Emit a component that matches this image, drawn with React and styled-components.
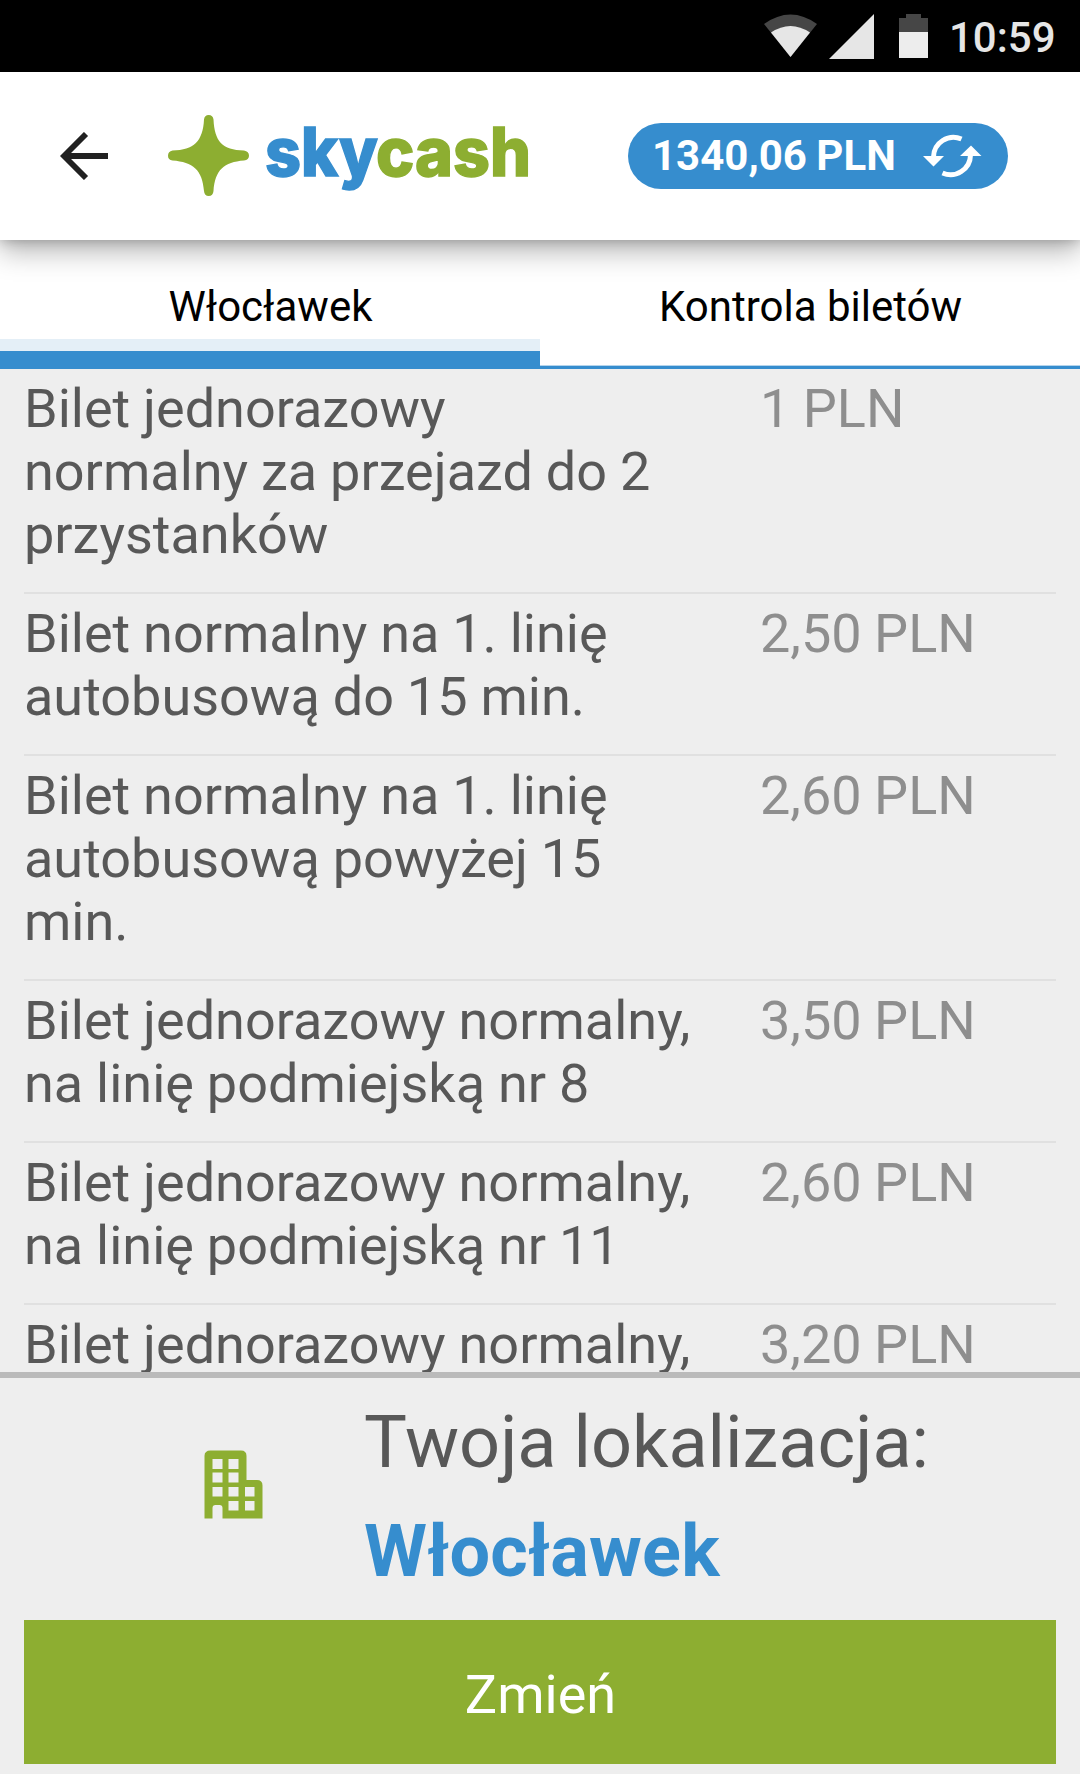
import React from 'react';
import styled, { createGlobalStyle } from 'styled-components';

const blue = '#368dce';
const green = '#8dae31';

const GlobalStyle = createGlobalStyle`
  * { box-sizing: border-box; }
  body { margin: 0; background: #eeeeee; }
`;

const Screen = styled.div`
  display: flex;
  flex-direction: column;
  width: 1080px;
  height: 1774px;
  overflow: hidden;
  background: #eeeeee;
  color: #585858;
  font-family: Roboto, 'Noto Sans', sans-serif;
`;

const StatusBar = styled.div`
  flex: none;
  display: flex;
  height: 72px;
  padding: 0 25px 0 764px;
  background: #000;
  color: #e6e6e6;
`;

const StatusIcons = styled.svg`
  display: block;
  flex: none;
  width: 185px;
  height: 72px;
`;

const Clock = styled.span`
  font-size: 42px;
  font-weight: 500;
  line-height: 76px;
`;

const Header = styled.header`
  flex: none;
  display: flex;
  align-items: center;
  position: relative;
  z-index: 1;
  height: 168px;
  padding: 0 72px 0 60px;
  background: #fff;
  box-shadow: 0 12px 26px rgba(0, 0, 0, 0.28), 0 0 12px rgba(0, 0, 0, 0.26);
`;

const BackIcon = styled.svg`
  flex: none;
  width: 49px;
  height: 48px;
`;

const Logo = styled.svg`
  flex: none;
  width: 366px;
  height: 112px;
  margin-left: 59px;
  overflow: visible;
`;

const Balance = styled.button`
  flex: none;
  display: flex;
  align-items: center;
  width: 380px;
  height: 66px;
  margin: 0 0 0 auto;
  padding: 0 26px 0 24px;
  justify-content: space-between;
  border: 0;
  border-radius: 33px;
  background: ${blue};
  color: #fff;
  font: 700 42px Roboto, sans-serif;
`;

const Amount = styled.span`
  padding-bottom: 2px;
  word-spacing: -1px;
`;

const RefreshIcon = styled.svg`
  width: 60px;
  height: 46px;
`;

const Tabs = styled.nav`
  flex: none;
  display: grid;
  grid-template-columns: 1fr 1fr;
  height: 129px;
`;

const Tab = styled.button`
  display: flex;
  flex-direction: column;
  height: 129px;
  padding: 0;
  border: 0;
  background: #fff;
  color: #000;
  font: 400 42px/50px Roboto, sans-serif;
`;

const TabLabel = styled.span`
  flex: 1;
  align-self: center;
  padding: 42px 0 0 1px;
`;

const TabIndicator = styled.span`
  align-self: stretch;
  height: ${(p) => (p.$active ? 30 : 4)}px;
  border-top: ${(p) => (p.$active ? '12px solid #e4eff7' : '1px solid #b4d4ec')};
  background: ${blue};
  background-clip: padding-box;
`;

const TicketList = styled.main`
  flex: none;
  height: 1003px;
  padding: 0 24px;
  overflow: hidden;
`;

const Ticket = styled.div`
  display: grid;
  grid-template-columns: 736px 1fr;
  padding: 8px 0 26px;
  border-bottom: 2px solid #e0e0e0;
  font-size: 54px;
  line-height: 63px;
`;

const TicketName = styled.div`
  width: 690px;
  white-space: pre-line;
  word-spacing: -0.5px;
`;

const Price = styled.div`
  color: #8e8e8e;
  word-spacing: -1px;
`;

const LocationPanel = styled.footer`
  flex: 1;
  display: flex;
  flex-direction: column;
  padding: 0 24px 10px;
  border-top: 6px solid #bababa;
`;

const LocationInfo = styled.div`
  display: grid;
  grid-template-columns: 340px 1fr;
  height: 242px;
`;

const BuildingIcon = styled.svg`
  width: 59px;
  height: 69px;
  margin: 72px 0 0 180px;
`;

const LocationText = styled.div`
  padding-top: 23px;
  font-size: 72px;
  line-height: 84px;
  word-spacing: -1px;
`;

const City = styled.div`
  margin-top: 25px;
  color: ${blue};
  font-weight: 700;
  letter-spacing: 0.2px;
`;

const ChangeButton = styled.button`
  height: 144px;
  padding: 5px 0 0 1px;
  border: 0;
  background: ${green};
  color: #fff;
  font: 400 54px Roboto, sans-serif;
`;

const tickets = [
  ['Bilet jednorazowy\nnormalny za przejazd do 2\nprzystanków', '1 PLN'],
  ['Bilet normalny na 1. linię\nautobusową do 15 min.', '2,50 PLN'],
  ['Bilet normalny na 1. linię\nautobusową powyżej 15\nmin.', '2,60 PLN'],
  ['Bilet jednorazowy normalny,\nna linię podmiejską nr 8', '3,50 PLN'],
  ['Bilet jednorazowy normalny,\nna linię podmiejską nr 11', '2,60 PLN'],
  ['Bilet jednorazowy normalny,', '3,20 PLN'],
];

export default function App() {
  return (
    <Screen>
      <GlobalStyle />
      <StatusBar>
        <StatusIcons viewBox="764 0 185 72">
          <path d="M790.5 57 764 24Q790.5 5 817 24Z" fill="#464646" />
          <path d="M790.5 57 771 32.5Q790.5 19.500 810 32.500Z" fill="#e6e6e6" />
          <path d="M829 59 874 14V59Z" fill="#e6e6e6" />
          <path d="M899 33V18H906V14H921V18H928V33Z" fill="#464646" />
          <path d="M899 32H928V58H899Z" fill="#ededed" />
        </StatusIcons>
        <Clock>10:59</Clock>
      </StatusBar>
      <Header>
        <BackIcon viewBox="60 132 49 48">
          <path d="M108 156H64M86 134 64 156 86 178" fill="none" stroke="#212121" strokeWidth="5.8" />
        </BackIcon>
        <Logo viewBox="168 100 366 112">
          <path
            d="M204 119.500Q204.500 115 208.700 115T213.500 119.500C214.500 141 222 150 244 150.500Q249 151.500 249 155.700T244 160.500C224 162 215 170 213.500 191Q213 196 208.700 196T204 191C202.500 170 193 162 172.500 160.500Q168 160 168 155.700T172.500 150.500C194 150 203 141 204 119.500Z"
            fill={green}
          />
          <g fontFamily="Inter, sans-serif" fontSize="67" fontWeight="800" strokeWidth="1.4">
            <text x="265" y="176" fill={blue} stroke={blue} textLength="113" lengthAdjust="spacingAndGlyphs">
              sky
            </text>
            <text x="376" y="176" fill={green} stroke={green} textLength="155" lengthAdjust="spacingAndGlyphs">
              cash
            </text>
          </g>
        </Logo>
        <Balance>
          <Amount>1340,06 PLN</Amount>
          <RefreshIcon viewBox="922 133 60 46">
            <path
              d="M961.500 139A20 20 0 0 0 933.500 157M942.500 173A20 20 0 0 0 970.500 155"
              fill="none"
              stroke="#fff"
              strokeWidth="5"
            />
            <path d="M923 156H944L933.500 166.500ZM960 156 971 145.500 981.500 156Z" fill="#fff" />
          </RefreshIcon>
        </Balance>
      </Header>
      <Tabs>
        <Tab>
          <TabLabel>Włocławek</TabLabel>
          <TabIndicator $active />
        </Tab>
        <Tab>
          <TabLabel>Kontrola biletów</TabLabel>
          <TabIndicator />
        </Tab>
      </Tabs>
      <TicketList>
        {tickets.map(([name, price], i) => (
          <Ticket key={i}>
            <TicketName>{name}</TicketName>
            <Price>{price}</Price>
          </Ticket>
        ))}
      </TicketList>
      <LocationPanel>
        <LocationInfo>
          <BuildingIcon viewBox="204 1450 59 69">
            <path
              fill={green}
              fillRule="evenodd"
              d="M204.500 1518.500V1456Q204.500 1450.500 210.500 1450.500H241Q246.500 1450.500 246.500 1456V1480H257Q262.500 1480 262.500 1485.500V1518.500H222.500V1508Q222.500 1505 219.500 1505H215.500Q212.500 1505 212.500 1508V1518.500ZM212.500 1459V1469H222.500V1459ZM228.500 1459V1469H238.500V1459ZM212.500 1472.500V1482.500H222.500V1472.500ZM228.500 1472.500V1482.500H238.500V1472.500ZM212.500 1487V1496.500H222.500V1487ZM228.500 1487V1496.500H238.500V1487ZM245 1487V1496.500H254.500V1487ZM228.500 1501V1510.500H238.500V1501ZM245 1501V1510.500H254.500V1501Z"
            />
          </BuildingIcon>
          <LocationText>
            Twoja lokalizacja:
            <City>Włocławek</City>
          </LocationText>
        </LocationInfo>
        <ChangeButton>Zmień</ChangeButton>
      </LocationPanel>
    </Screen>
  );
}
